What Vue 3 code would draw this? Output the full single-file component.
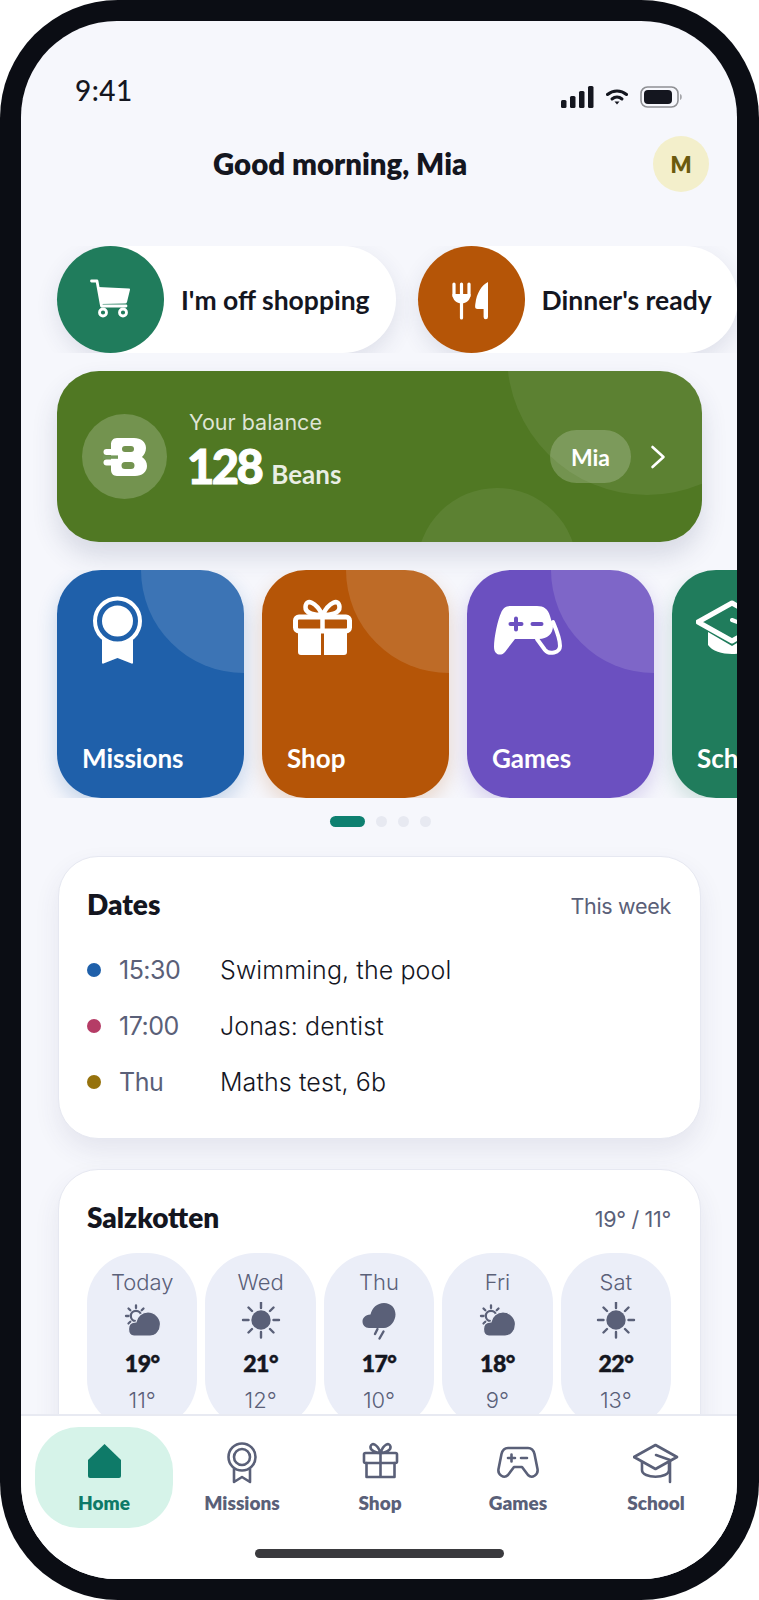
<template>
  <div class="phone">
    <div class="screen">
      <div class="status">
        <span class="time">9:41</span>
        <div class="status-icons">
          <svg width="33" height="22" viewBox="0 0 33 22">
            <rect x="0" y="14" width="5.5" height="8" rx="1.5" />
            <rect x="9" y="10" width="5.5" height="12" rx="1.5" />
            <rect x="18" y="5" width="5.5" height="17" rx="1.5" />
            <rect x="27" y="0" width="5.5" height="22" rx="1.5" />
          </svg>
          <svg width="22" height="16" viewBox="0 0 22 16" class="wifi">
            <path d="M1.5 5.5C7 .8 15 .8 20.5 5.5" />
            <path d="M6 10c3-2.6 7-2.6 10 0" />
            <path d="M8.5 12.4h5L11 15.6z" class="wifi-dot" />
          </svg>
          <svg width="42" height="22" viewBox="0 0 42 22">
            <rect x="1" y="1" width="37" height="20" rx="6.5" fill="none" stroke="#8f9094" stroke-width="1.6" />
            <rect x="4" y="4" width="28" height="14" rx="4" fill="#14161f" />
            <path d="M40 8c1.4.4 1.8 1.6 1.8 3s-.4 2.6-1.8 3z" fill="#a5a6aa" />
          </svg>
        </div>
      </div>

      <header class="header">
        <h1 class="greeting">Good morning, Mia</h1>
        <div class="avatar">M</div>
      </header>

      <div class="content">
        <div class="quick-row">
          <div class="quick-pill">
            <div class="quick-icon green">
              <svg width="48" height="48" viewBox="0 0 48 48">
                <path d="M4.5 5H10l4.500 25H39" fill="none" stroke="#fff" stroke-width="2.8" stroke-linecap="round" stroke-linejoin="round" />
                <path d="M11 11l31 1.500a1 1 0 0 1 1 1.200L40 26a2 2 0 0 1-2 1.500L14 28z" fill="#fff" />
                <circle cx="16" cy="36.5" r="3.5" fill="none" stroke="#fff" stroke-width="2.8" />
                <circle cx="36" cy="36.5" r="3.5" fill="none" stroke="#fff" stroke-width="2.8" />
              </svg>
            </div>
            <span class="quick-text">I'm off shopping</span>
          </div>
          <div class="quick-pill">
            <div class="quick-icon orange">
              <svg width="48" height="48" viewBox="0 0 48 48">
                <path d="M7 8v12M14.500 8v34M22 8v12" fill="none" stroke="#fff" stroke-width="3.2" stroke-linecap="round" />
                <path d="M5.500 18h18c0 6-4 9.500-9 9.500s-9-3.500-9-9.500z" fill="#fff" />
                <path d="M41 6v35a2.200 2.200 0 0 1-4.400 0v-8H30.500c-3 0-2.500-3-2-6 1-9 6-18 12.500-21z" fill="#fff" />
              </svg>
            </div>
            <span class="quick-text">Dinner's ready</span>
          </div>
        </div>

        <div class="balance">
          <div class="balance-circle big"></div>
          <div class="balance-circle small"></div>
          <div class="bean-badge">
            <svg width="48" height="48" viewBox="0 0 48 48">
              <path fill-rule="evenodd" fill="#fff" d="M16 5h17c7 0 12 4 12 10 0 4-2 7-4 9 3 2 5 5 5 9 0 6-5 10-12 10H16c-4 0-6-3-6-6V11c0-3 2-6 6-6zm8 8a3 3 0 0 0 0 6h6a3 3 0 0 0 0-6zm0 16a3.500 3.500 0 0 0 0 7h6a3.500 3.500 0 0 0 0-7z" />
              <rect x="2.5" y="16" width="16" height="6" rx="3" fill="#fff" />
              <rect x="2.5" y="26.5" width="16" height="6" rx="3" fill="#fff" />
              <rect x="2" y="22.4" width="15" height="3.4" fill="#74995a" />
            </svg>
          </div>
          <div class="balance-text">
            <div class="balance-label">Your balance</div>
            <div class="balance-value">
              <span class="balance-num">128</span>
              <span class="balance-unit">Beans</span>
            </div>
          </div>
          <div class="balance-user">Mia</div>
          <svg class="chevron" width="16" height="24" viewBox="0 0 16 24">
            <path d="M2.500 2l11 10-11 10" fill="none" stroke="#fff" stroke-width="2.6" stroke-linecap="round" stroke-linejoin="round" />
          </svg>
        </div>

        <div class="tile-row">
          <div v-for="tile in tiles" :key="tile.name" class="tile" :class="tile.cls">
            <div class="tile-circle"></div>
            <svg v-if="tile.name === 'Missions'" class="tile-icon" width="72" height="72" viewBox="0 0 72 72">
              <circle cx="36.5" cy="27" r="22.5" fill="none" stroke="#fff" stroke-width="4" />
              <circle cx="36.5" cy="27" r="15.5" fill="#fff" />
              <path d="M21 45A24.500 24.500 0 0 0 52 45V68.500a1 1 0 0 1-1.500 1L36.500 64l-14 5.500a1 1 0 0 1-1.500-1z" fill="#fff" />
            </svg>
            <svg v-if="tile.name === 'Shop'" class="tile-icon" width="72" height="72" viewBox="0 0 72 72">
              <path d="M36.500 21C30 8 20 4 19.500 13c-.5 7 10.500 8 17 8s17.500-1 17-8c-.5-9-10.500-5-17 8z" fill="none" stroke="#fff" stroke-width="4.5" />
              <rect x="9.500" y="23" width="54" height="14" rx="3.5" fill="none" stroke="#fff" stroke-width="5" />
              <path d="M36.500 23v14" stroke="#fff" stroke-width="4.5" />
              <path d="M12 39h23v22H15a3 3 0 0 1-3-3zM38 39h23v19a3 3 0 0 1-3 3H38z" fill="#fff" />
            </svg>
            <svg v-if="tile.name === 'Games'" class="tile-icon" width="72" height="72" viewBox="0 0 72 72">
              <path d="M20 12h26c7 0 11 3 13 10l3 10c0 8-6 13-14 13H24L14 58c-3 4-11 4-11-5 0-10 4-28 7-34 2-5 5-7 10-7z" fill="#fff" />
              <path d="M46 45l8 11c4 5 15 3 15-4 0-8-4-17-7-24" fill="none" stroke="#fff" stroke-width="4" stroke-linecap="round" />
              <path d="M25 24.500v11M19.500 30h11M41.500 30h9" fill="none" stroke="#6b50c0" stroke-width="4" stroke-linecap="round" />
            </svg>
            <svg v-if="tile.name === 'School'" class="tile-icon" width="72" height="72" viewBox="0 0 72 72">
              <path d="M36 9l34 19-34 19L2 28z" fill="none" stroke="#fff" stroke-width="5" stroke-linejoin="round" />
              <path d="M12 38l24 14 24-14v13c-8 12-40 12-48 0z" fill="#fff" />
              <path d="M36 26l22 8" stroke="#fff" stroke-width="4" stroke-linecap="round" />
            </svg>
            <span class="tile-label">{{ tile.name }}</span>
          </div>
        </div>

        <div class="pager">
          <span class="pager-active"></span>
          <span v-for="n in 3" :key="n" class="pager-dot"></span>
        </div>

        <section class="card dates">
          <div class="card-head">
            <h2 class="card-title">Dates</h2>
            <span class="card-side">This week</span>
          </div>
          <div v-for="row in dates" :key="row.when" class="date-row">
            <span class="date-dot" :style="{ background: row.color }"></span>
            <span class="date-when">{{ row.when }}</span>
            <span class="date-what">{{ row.what }}</span>
          </div>
        </section>

        <section class="card weather">
          <div class="card-head">
            <h2 class="card-title">Salzkotten</h2>
            <span class="card-side">19° / 11°</span>
          </div>
          <div class="days">
            <div v-for="day in days" :key="day.name" class="day">
              <div class="day-name">{{ day.name }}</div>
              <svg v-if="day.icon === 'partly'" class="day-icon" width="40" height="40" viewBox="0 0 40 40">
                <g fill="none" stroke="#5a6078" stroke-width="2.3" stroke-linecap="round">
                  <circle cx="14" cy="14" r="5.2" />
                  <path d="M14 3.500v2.500M21.500 6.500l-1.800 1.800M6.500 6.500l1.800 1.800M4 14h2.500M6.500 21.500l1.800-1.800" />
                </g>
                <path d="M12 34c-4 0-5.500-3-5.500-7s2.500-7 7.500-7c1-6 6-10 12-10 7 0 12.500 6 12.500 12 0 7-4.500 12-10.500 12z" fill="#5a6078" stroke="#ebeef8" stroke-width="1.2" />
              </svg>
              <svg v-if="day.icon === 'sun'" class="day-icon" width="40" height="40" viewBox="0 0 40 40">
                <circle cx="20" cy="18" r="9.7" fill="#5a6078" />
                <path d="M20 .5v5.500M20 30v5.500M2 18h5.500M32.500 18H38M7.500 5.500l3.500 3.500M32.500 5.500L29 9M7.500 30.500L11 27M32.500 30.500L29 27" fill="none" stroke="#5a6078" stroke-width="2.4" stroke-linecap="round" />
              </svg>
              <svg v-if="day.icon === 'rain'" class="day-icon" width="40" height="40" viewBox="0 0 40 40">
                <path d="M10 26c-4 0-6.500-3-6.500-6.500S6 13 11.500 12.500C13 6 18 1 25 1c7 0 11.500 5 11.500 11.500S31 26 25 26z" fill="#5a6078" />
                <path d="M18.500 27l-2.500 5M24.500 29.500L20.500 36.500" fill="none" stroke="#5a6078" stroke-width="2.4" stroke-linecap="round" />
              </svg>
              <div class="day-high">{{ day.high }}°</div>
              <div class="day-low">{{ day.low }}°</div>
            </div>
          </div>
        </section>
      </div>

      <nav class="nav">
        <div class="nav-items">
          <div v-for="item in navItems" :key="item" class="nav-item" :class="{ active: item === 'Home' }">
            <svg v-if="item === 'Home'" width="46" height="46" viewBox="0 0 46 46">
              <path d="M23.500 4L40 20v16a2 2 0 0 1-2 2H9a2 2 0 0 1-2-2V20z" fill="#0e7a68" />
            </svg>
            <svg v-if="item === 'Missions'" class="nav-line" width="46" height="46" viewBox="0 0 46 46">
              <circle cx="23" cy="17" r="13.5" />
              <circle cx="23" cy="17" r="8" />
              <path d="M15 29v13l8-5 8 5V29" />
            </svg>
            <svg v-if="item === 'Shop'" class="nav-line" width="46" height="46" viewBox="0 0 46 46">
              <rect x="7" y="13" width="33" height="10" rx="1.5" />
              <path d="M9.500 23v14h28V23M23.500 13v24" />
              <path d="M23.500 13c-3-9-9-11-10-6.500-.7 4 5.500 6.500 10 6.500s10.700-2.500 10-6.500c-1-4.500-7-2.500-10 6.500z" />
            </svg>
            <svg v-if="item === 'Games'" class="nav-line" width="46" height="46" viewBox="0 0 46 46">
              <path d="M13 8h20c4 0 5.500 2 6.500 6l3 15c1 6-5.500 10-9.500 6l-6-8h-8l-6 8c-4 4-10.500 0-9.500-6l3-15c1-4 2.500-6 6.500-6z" />
              <path d="M16.500 14.500v7M13 18h7M26 18h6" />
            </svg>
            <svg v-if="item === 'School'" class="nav-line" width="46" height="46" viewBox="0 0 46 46">
              <path d="M22.500 5L44 17 22.500 29 1 17z" />
              <path d="M9 22v8c0 9 27 9 27 0v-8" />
              <path d="M23 15l14 5v22" />
            </svg>
            <span class="nav-label">{{ item }}</span>
          </div>
        </div>
        <div class="home-bar"></div>
      </nav>
    </div>
  </div>
</template>

<script setup>
const tiles = [
  { name: 'Missions', cls: 'blue' },
  { name: 'Shop', cls: 'rust' },
  { name: 'Games', cls: 'purple' },
  { name: 'School', cls: 'teal' }
]

const dates = [
  { when: '15:30', what: 'Swimming, the pool', color: '#1f60aa' },
  { when: '17:00', what: 'Jonas: dentist', color: '#b53c66' },
  { when: 'Thu', what: 'Maths test, 6b', color: '#96720c' }
]

const days = [
  { name: 'Today', icon: 'partly', high: 19, low: 11 },
  { name: 'Wed', icon: 'sun', high: 21, low: 12 },
  { name: 'Thu', icon: 'rain', high: 17, low: 10 },
  { name: 'Fri', icon: 'partly', high: 18, low: 9 },
  { name: 'Sat', icon: 'sun', high: 22, low: 13 }
]

const navItems = ['Home', 'Missions', 'Shop', 'Games', 'School']
</script>

<style>
html,
body {
  background: #fff;
}
</style>

<style scoped>
.phone {
  width: 759px;
  height: 1600px;
  box-sizing: border-box;
  padding: 21px 22px 21px 21px;
  background: #0b0d14;
  border-radius: 118px;
  overflow: hidden;
  font-family: "Lato", sans-serif;
}

.screen {
  height: 100%;
  display: flex;
  flex-direction: column;
  background: #f6f7fc;
  border-radius: 96px;
  overflow: hidden;
}

.status {
  display: flex;
  justify-content: space-between;
  align-items: flex-start;
  padding: 55px 55px 0 54px;
  height: 28px;
  flex-shrink: 0;
}

.time {
  font-size: 28px;
  line-height: 28px;
  font-weight: 500;
  letter-spacing: 0.5px;
  color: #14161f;
}

.status-icons {
  display: flex;
  align-items: center;
  gap: 12px;
  margin-top: 10px;
  fill: #14161f;
}

.wifi path {
  fill: none;
  stroke: #14161f;
  stroke-width: 3;
  stroke-linecap: round;
}

.wifi .wifi-dot {
  fill: #14161f;
  stroke: none;
}

.header {
  display: flex;
  justify-content: space-between;
  align-items: center;
  padding: 0 28px 0 192px;
  margin-top: 32px;
  height: 56px;
  flex-shrink: 0;
}

.greeting {
  margin: 0;
  font-size: 29.4px;
  line-height: 36px;
  font-weight: 800;
  color: #14161f;
}

.avatar {
  width: 56px;
  height: 56px;
  border-radius: 50%;
  background: #f3efcb;
  color: #6b5a0e;
  font-size: 22px;
  font-weight: 800;
  display: flex;
  align-items: center;
  justify-content: center;
}

.content {
  flex: 1;
  min-height: 0;
  overflow: hidden;
}

.quick-row {
  display: flex;
  gap: 22px;
  margin-top: 54px;
  padding-left: 36px;
  height: 107px;
  overflow: hidden;
}

.quick-pill {
  display: flex;
  align-items: center;
  flex-shrink: 0;
  height: 107px;
  background: #fff;
  border-radius: 54px;
  padding-right: 26px;
  box-shadow: 0 8px 22px rgba(50, 60, 100, 0.12);
}

.quick-icon {
  width: 107px;
  height: 107px;
  border-radius: 50%;
  display: flex;
  align-items: center;
  justify-content: center;
  margin-right: 17px;
}

.green {
  background: #207c5c;
}

.orange {
  background: #b55507;
}

.quick-text {
  font-size: 26.5px;
  font-weight: 700;
  color: #14161f;
}

.balance {
  position: relative;
  display: flex;
  align-items: center;
  margin: 18px 0 0 36px;
  width: 645px;
  height: 171px;
  box-sizing: border-box;
  padding: 0 36px 0 25px;
  border-radius: 42px;
  background: #507823;
  overflow: hidden;
  color: #fff;
  box-shadow: 0 14px 26px rgba(50, 60, 100, 0.16);
}

.balance-circle {
  position: absolute;
  border-radius: 50%;
  background: rgba(255, 255, 255, 0.07);
}

.balance-circle.big {
  width: 280px;
  height: 280px;
  top: -156px;
  right: -85px;
}

.balance-circle.small {
  width: 160px;
  height: 160px;
  top: 117px;
  left: 360px;
}

.bean-badge {
  position: relative;
  width: 85px;
  height: 85px;
  border-radius: 50%;
  background: rgba(255, 255, 255, 0.2);
  display: flex;
  align-items: center;
  justify-content: center;
  flex-shrink: 0;
}

.balance-text {
  position: relative;
  margin-left: 22px;
  padding-bottom: 14px;
  flex: 1;
}

.balance-label {
  font-family: "Inter", sans-serif;
  font-size: 21.5px;
  line-height: 24px;
  color: rgba(255, 255, 255, 0.82);
}

.balance-value {
  display: flex;
  align-items: baseline;
  gap: 10px;
  margin-top: 9px;
  height: 46px;
}

.balance-num {
  margin-left: -2px;
  font-size: 47px;
  line-height: 46px;
  font-weight: 900;
  letter-spacing: -2.5px;
  -webkit-text-stroke: 1px #fff;
}

.balance-unit {
  font-size: 26px;
  font-weight: 700;
  color: rgba(255, 255, 255, 0.88);
}

.balance-user {
  position: relative;
  width: 81px;
  height: 53px;
  border-radius: 27px;
  background: rgba(255, 255, 255, 0.2);
  display: flex;
  align-items: center;
  justify-content: center;
  font-size: 23px;
  font-weight: 700;
}

.chevron {
  position: relative;
  margin-left: 19px;
  flex-shrink: 0;
}

.tile-row {
  display: flex;
  gap: 18px;
  margin-top: 28px;
  padding-left: 36px;
  height: 228px;
  overflow: hidden;
}

.tile {
  position: relative;
  flex-shrink: 0;
  width: 187px;
  height: 228px;
  box-sizing: border-box;
  padding: 24px;
  border-radius: 44px;
  overflow: hidden;
  display: flex;
  flex-direction: column;
  justify-content: space-between;
  color: #fff;
}

.blue {
  background: #1f60aa;
  box-shadow: 0 8px 20px rgba(31, 96, 170, 0.24);
}

.rust {
  background: #b55507;
  box-shadow: 0 8px 20px rgba(181, 85, 7, 0.2);
}

.purple {
  background: #6b50c0;
  box-shadow: 0 8px 20px rgba(107, 80, 192, 0.24);
}

.teal {
  background: #207c5c;
  box-shadow: 0 8px 20px rgba(32, 124, 92, 0.2);
}

.tile-circle {
  position: absolute;
  width: 206px;
  height: 206px;
  top: -103px;
  right: -103px;
  border-radius: 50%;
  background: rgba(255, 255, 255, 0.13);
}

.tile-icon {
  position: relative;
}

.tile-label {
  font-size: 26px;
  line-height: 32px;
  font-weight: 700;
  margin-left: 1px;
  white-space: nowrap;
}

.pager {
  display: flex;
  justify-content: center;
  gap: 11px;
  margin-top: 18px;
  margin-left: 2px;
  height: 11px;
}

.pager-active {
  width: 35px;
  border-radius: 6px;
  background: #0e8070;
}

.pager-dot {
  width: 11px;
  border-radius: 50%;
  background: #e7e9f1;
}

.card {
  width: 643px;
  margin-left: 37px;
  box-sizing: border-box;
  padding: 29px 29px 29px 28px;
  background: #fff;
  border: 1px solid #e6e8f1;
  border-radius: 40px;
  box-shadow: 0 12px 26px rgba(50, 60, 100, 0.09);
}

.dates {
  margin-top: 29px;
  height: 283px;
}

.weather {
  margin-top: 30px;
  height: 300px;
}

.card-head {
  display: flex;
  justify-content: space-between;
  align-items: center;
  height: 40px;
}

.card-title {
  margin: 0;
  padding-bottom: 4px;
  font-size: 28px;
  font-weight: 800;
  color: #14161f;
}

.card-side {
  font-family: "Inter", sans-serif;
  font-size: 21.5px;
  letter-spacing: -0.3px;
  color: #5a6078;
}

.date-row {
  display: flex;
  align-items: center;
  height: 56px;
}

.dates .card-head {
  margin-bottom: 16px;
}

.date-dot {
  width: 14px;
  height: 14px;
  border-radius: 50%;
  flex-shrink: 0;
}

.date-when {
  width: 101px;
  margin-left: 18px;
  font-family: "Inter", sans-serif;
  font-size: 25px;
  color: #5a6078;
  letter-spacing: -0.5px;
}

.date-what {
  font-family: "Inter", sans-serif;
  font-size: 25px;
  font-weight: 300;
  letter-spacing: 0.1px;
  color: #14161f;
}

.days {
  display: flex;
  gap: 8px;
  margin-top: 14px;
}

.day {
  flex: 1;
  height: 176px;
  box-sizing: border-box;
  padding-top: 15px;
  border-radius: 50px;
  background: #ebeef8;
  text-align: center;
}

.day-name {
  font-family: "Inter", sans-serif;
  font-size: 22px;
  line-height: 28px;
  font-weight: 300;
  color: #5a6078;
}

.day-icon {
  display: block;
  margin: 6px auto 0;
}

.day-high {
  margin-top: 8px;
  font-size: 23px;
  line-height: 26px;
  font-weight: 900;
  letter-spacing: -0.5px;
  color: #14161f;
  -webkit-text-stroke: 0.5px #14161f;
}

.day-low {
  margin-top: 11px;
  font-family: "Inter", sans-serif;
  font-size: 22px;
  line-height: 26px;
  font-weight: 300;
  color: #5a6078;
}

.nav {
  flex-shrink: 0;
  height: 165px;
  box-sizing: border-box;
  background: #fff;
  border-top: 2px solid #e8eaf2;
  padding: 11px 12px 0 14px;
  display: flex;
  flex-direction: column;
  align-items: center;
}

.nav-items {
  display: flex;
  width: 100%;
}

.nav-item {
  flex: 1;
  height: 101px;
  box-sizing: border-box;
  padding-top: 13px;
  border-radius: 44px;
  display: flex;
  flex-direction: column;
  align-items: center;
  color: #5a6078;
}

.nav-item.active {
  background: #d6f3e9;
  color: #0e7a68;
}

.nav-line {
  fill: none;
  stroke: #5a6078;
  stroke-width: 2.6;
  stroke-linecap: round;
  stroke-linejoin: round;
}

.nav-label {
  margin-top: 5px;
  font-size: 19px;
  line-height: 24px;
  font-weight: 800;
}

.home-bar {
  width: 249px;
  height: 9px;
  margin-top: 21px;
  margin-right: 2px;
  border-radius: 5px;
  background: #3a3a3e;
}
</style>
